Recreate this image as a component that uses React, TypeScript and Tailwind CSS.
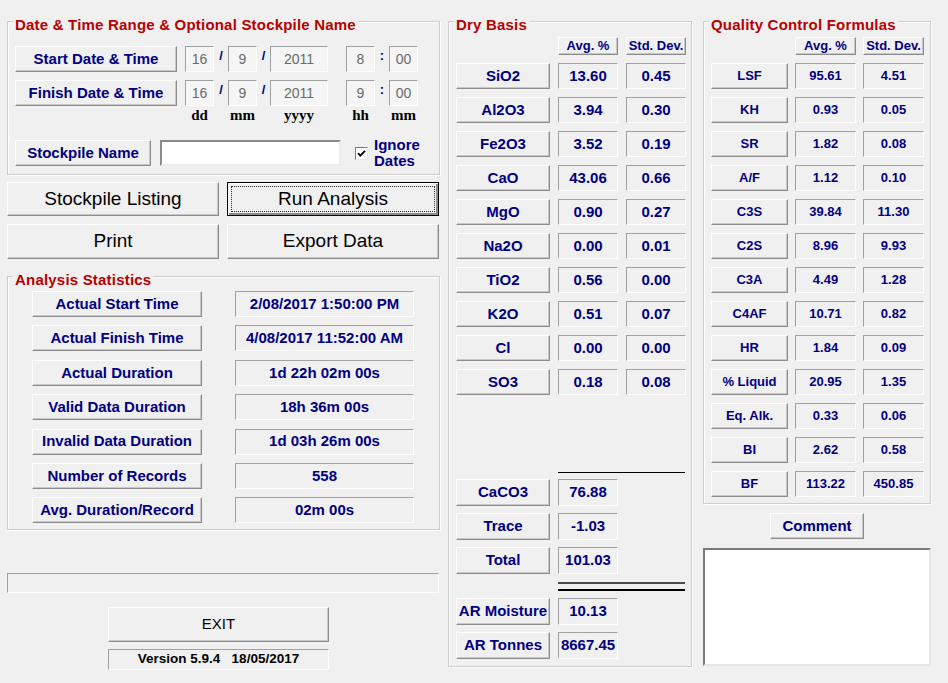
import React from "react";

const raised =
  "border border-t-white border-l-white border-r-[#8c8c8c] border-b-[#8c8c8c] shadow-[inset_-1px_-1px_0_#c8c8c8] bg-[#f0f0f0]";
const sunken =
  "border border-t-[#a0a0a0] border-l-[#a0a0a0] border-r-white border-b-white bg-[#f0f0f0]";
const navy = "text-[#000080] font-bold";

function Btn({ className = "", children }: { className?: string; children: React.ReactNode }) {
  return (
    <div className={`${raised} flex items-center justify-center whitespace-nowrap ${className}`}>
      {children}
    </div>
  );
}

function Cell({ className = "", children }: { className?: string; children?: React.ReactNode }) {
  return (
    <div className={`${sunken} flex items-center justify-center whitespace-nowrap ${className}`}>
      {children}
    </div>
  );
}

function Group({
  title,
  className = "",
  children,
}: {
  title: string;
  className?: string;
  children: React.ReactNode;
}) {
  return (
    <div
      className={`relative border border-[#cdcdcd] shadow-[1px_1px_0_#fff,inset_1px_1px_0_#fff] ${className}`}
    >
      <span className="absolute -top-[6px] left-[5px] bg-[#f0f0f0] px-[2px] text-[15px] leading-[18px] font-bold text-[#b80000] whitespace-nowrap tracking-[0.2px]">
        {title}
      </span>
      {children}
    </div>
  );
}

function DateField({ w, children }: { w: string; children: React.ReactNode }) {
  return (
    <div
      className={`${w} h-[26px] border border-t-[#a0a0a0] border-l-[#a0a0a0] border-r-white border-b-white bg-[#f5f5f5] flex items-center justify-center text-[14px] text-[#6a6a6a]`}
    >
      {children}
    </div>
  );
}

function Sep({ w, children }: { w: string; children: string }) {
  return (
    <div className={`${w} flex justify-center pt-[3px] text-[13px] leading-[14px] ${navy}`}>{children}</div>
  );
}

function DateRow({
  label,
  v,
  className = "",
}: {
  label: string;
  v: [string, string, string, string, string];
  className?: string;
}) {
  return (
    <div className={`flex h-[26px] ${className}`}>
      <Btn className={`w-[162px] h-[26px] text-[15px] ${navy}`}>{label}</Btn>
      <div className="w-[8px]" />
      <DateField w="w-[29px]">{v[0]}</DateField>
      <Sep w="w-[14px]">/</Sep>
      <DateField w="w-[29px]">{v[1]}</DateField>
      <Sep w="w-[13px]">/</Sep>
      <DateField w="w-[58px]">{v[2]}</DateField>
      <div className="w-[18px]" />
      <DateField w="w-[29px]">{v[3]}</DateField>
      <Sep w="w-[14px]">:</Sep>
      <DateField w="w-[29px]">{v[4]}</DateField>
    </div>
  );
}

const stats = [
  ["Actual Start Time", "2/08/2017 1:50:00 PM"],
  ["Actual Finish Time", "4/08/2017 11:52:00 AM"],
  ["Actual Duration", "1d 22h 02m 00s"],
  ["Valid Data Duration", "18h 36m 00s"],
  ["Invalid Data Duration", "1d 03h 26m 00s"],
  ["Number of Records", "558"],
  ["Avg. Duration/Record", "02m 00s"],
];

const dry = [
  ["SiO2", "13.60", "0.45"],
  ["Al2O3", "3.94", "0.30"],
  ["Fe2O3", "3.52", "0.19"],
  ["CaO", "43.06", "0.66"],
  ["MgO", "0.90", "0.27"],
  ["Na2O", "0.00", "0.01"],
  ["TiO2", "0.56", "0.00"],
  ["K2O", "0.51", "0.07"],
  ["Cl", "0.00", "0.00"],
  ["SO3", "0.18", "0.08"],
];

const qc = [
  ["LSF", "95.61", "4.51"],
  ["KH", "0.93", "0.05"],
  ["SR", "1.82", "0.08"],
  ["A/F", "1.12", "0.10"],
  ["C3S", "39.84", "11.30"],
  ["C2S", "8.96", "9.93"],
  ["C3A", "4.49", "1.28"],
  ["C4AF", "10.71", "0.82"],
  ["HR", "1.84", "0.09"],
  ["% Liquid", "20.95", "1.35"],
  ["Eq. Alk.", "0.33", "0.06"],
  ["BI", "2.62", "0.58"],
  ["BF", "113.22", "450.85"],
];

export default function App() {
  return (
    <div className="w-[948px] h-[683px] overflow-hidden bg-[#f0f0f0] flex items-start pl-[7px] pt-[21px] font-['Liberation_Sans',Arial,sans-serif]">
      {/* left column */}
      <div className="w-[433px] flex flex-col">
        <Group title="Date & Time Range & Optional Stockpile Name" className="h-[154px] pt-[24px] pl-[7px]">
          <DateRow label="Start Date & Time" v={["16", "9", "2011", "8", "00"]} />
          <DateRow label="Finish Date & Time" v={["16", "9", "2011", "9", "00"]} className="mt-[8px]" />
          <div className="flex pl-[170px] h-[18px] font-['Liberation_Serif','Times_New_Roman',serif] font-bold text-[15px] leading-[18px] text-black">
            <div className="w-[29px] text-center">dd</div>
            <div className="w-[14px]" />
            <div className="w-[29px] text-center">mm</div>
            <div className="w-[13px]" />
            <div className="w-[58px] text-center">yyyy</div>
            <div className="w-[18px]" />
            <div className="w-[29px] text-center">hh</div>
            <div className="w-[14px]" />
            <div className="w-[29px] text-center">mm</div>
          </div>
          <div className="flex items-center mt-[16px] h-[26px]">
            <Btn className={`w-[136px] h-[26px] text-[15px] ${navy}`}>Stockpile Name</Btn>
            <div className="ml-[9px] w-[181px] h-[26px] bg-white border-2 border-t-[#8a8a8a] border-l-[#8a8a8a] border-r-[#ececec] border-b-[#ececec]" />
            <div className="ml-[14px] w-[13px] h-[13px] bg-white border border-t-[#7a7a7a] border-l-[#7a7a7a] border-r-[#e8e8e8] border-b-[#e8e8e8] flex items-center justify-center">
              <svg width="9" height="9" viewBox="0 0 9 9">
                <path d="M1 4.2 L3.3 6.6 L8 1.8" fill="none" stroke="#000" strokeWidth="1.8" />
              </svg>
            </div>
            <div className={`ml-[6px] text-[15px] leading-[16px] ${navy}`}>
              Ignore
              <br />
              Dates
            </div>
          </div>
        </Group>

        <div className="mt-[7px] grid grid-cols-[212px_212px] gap-x-[8px] gap-y-[8px] text-[19px] text-black">
          <Btn className="h-[34px]">Stockpile Listing</Btn>
          <div className="h-[34px] border border-black bg-[#f0f0f0] p-[3px] shadow-[inset_1px_1px_0_#fff,inset_-2px_-2px_0_#8c8c8c]">
            <div className="h-full border border-dotted border-[#333] flex items-center justify-center">
              Run Analysis
            </div>
          </div>
          <Btn className="h-[35px]">Print</Btn>
          <Btn className="h-[35px]">Export Data</Btn>
        </div>

        <Group title="Analysis Statistics" className="mt-[17px] h-[254px] pt-[14px] pl-[24px]">
          <div className="flex flex-col gap-[8.4px]">
            {stats.map(([k, v]) => (
              <div key={k} className="flex">
                <Btn className={`w-[170px] h-[26px] text-[15px] ${navy}`}>{k}</Btn>
                <Cell className={`ml-[33px] w-[179px] h-[26px] text-[15px] ${navy}`}>{v}</Cell>
              </div>
            ))}
          </div>
        </Group>

        <div className="mt-[43px] w-[432px] h-[20px] border border-t-[#a0a0a0] border-l-[#a0a0a0] border-r-white border-b-white" />
        <Btn className="mt-[14px] ml-[101px] w-[221px] h-[35px] text-[15px] text-black">EXIT</Btn>
        <Cell className="mt-[7px] ml-[101px] w-[221px] h-[21px] text-[13.5px] font-bold text-black whitespace-pre">
          {"Version 5.9.4   18/05/2017"}
        </Cell>
      </div>

      {/* dry basis */}
      <Group title="Dry Basis" className="ml-[8px] w-[244px] h-[646px] pt-[15px] pl-[7px]">
        <div className="flex h-[18px] pl-[102px] text-[13px]">
          <Btn className={`w-[60px] h-[18px] ${navy}`}>Avg. %</Btn>
          <Btn className={`ml-[8px] w-[60px] h-[18px] ${navy}`}>Std. Dev.</Btn>
        </div>
        <div className="mt-[8px] flex flex-col gap-[8px] text-[15px]">
          {dry.map(([k, a, s]) => (
            <div key={k} className="flex h-[26px]">
              <Btn className={`w-[94px] ${navy}`}>{k}</Btn>
              <Cell className={`ml-[8px] w-[60px] ${navy}`}>{a}</Cell>
              <Cell className={`ml-[8px] w-[60px] ${navy}`}>{s}</Cell>
            </div>
          ))}
        </div>
        <div className="mt-[77px] ml-[102px] w-[127px] border-t border-black" />
        <div className="mt-[6px] flex flex-col gap-[7px] text-[15px]">
          {[
            ["CaCO3", "76.88"],
            ["Trace", "-1.03"],
            ["Total", "101.03"],
          ].map(([k, v]) => (
            <div key={k} className="flex h-[27px]">
              <Btn className={`w-[94px] ${navy}`}>{k}</Btn>
              <Cell className={`ml-[8px] w-[60px] ${navy}`}>{v}</Cell>
            </div>
          ))}
        </div>
        <div className="mt-[8px] ml-[102px] w-[127px] border-t-2 border-[#4a4a4a]" />
        <div className="mt-[5px] ml-[102px] w-[127px] border-t-2 border-black" />
        <div className="mt-[7px] flex flex-col gap-[7px] text-[15px]">
          {[
            ["AR Moisture", "10.13"],
            ["AR Tonnes", "8667.45"],
          ].map(([k, v]) => (
            <div key={k} className="flex h-[27px]">
              <Btn className={`w-[94px] ${navy}`}>{k}</Btn>
              <Cell className={`ml-[8px] w-[60px] ${navy}`}>{v}</Cell>
            </div>
          ))}
        </div>
      </Group>

      {/* quality control */}
      <div className="ml-[11px] w-[228px] flex flex-col">
        <Group title="Quality Control Formulas" className="h-[483px] pt-[15px] pl-[7px]">
          <div className="flex h-[18px] pl-[84px] text-[13px]">
            <Btn className={`w-[61px] h-[18px] ${navy}`}>Avg. %</Btn>
            <Btn className={`ml-[7px] w-[61px] h-[18px] ${navy}`}>Std. Dev.</Btn>
          </div>
          <div className="mt-[8px] flex flex-col gap-[8px] text-[13px]">
            {qc.map(([k, a, s]) => (
              <div key={k} className="flex h-[26px]">
                <Btn className={`w-[77px] ${navy}`}>{k}</Btn>
                <Cell className={`ml-[7px] w-[61px] ${navy}`}>{a}</Cell>
                <Cell className={`ml-[7px] w-[61px] ${navy}`}>{s}</Cell>
              </div>
            ))}
          </div>
        </Group>
        <Btn className={`mt-[9px] self-center w-[94px] h-[26px] text-[15px] ${navy}`}>Comment</Btn>
        <div className="mt-[9px] w-full h-[118px] bg-white border-2 border-t-[#7a7a7a] border-l-[#7a7a7a] border-r-[#e6e6e6] border-b-[#e6e6e6]" />
      </div>
    </div>
  );
}
